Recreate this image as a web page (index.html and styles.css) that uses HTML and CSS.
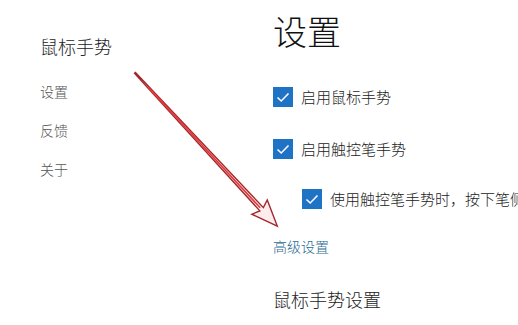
FILE: index.html
```html
<!DOCTYPE html>
<html lang="zh-CN">
<head>
<meta charset="utf-8">
<link rel="stylesheet" href="styles.css">
</head>
<body>
<div class="page">
  <aside class="sidebar">
    <div class="app-title">鼠标手势</div>
    <nav class="nav">
      <div class="nav-item">设置</div>
      <div class="nav-item">反馈</div>
      <div class="nav-item">关于</div>
    </nav>
  </aside>
  <main class="main">
    <h1 class="title">设置</h1>
    <div class="check-row">
      <span class="box"><svg viewBox="0 0 20 20" width="20" height="20"><path d="M4.5 10.5 L8.2 14 L15.5 6.5" fill="none" stroke="#fff" stroke-width="1.6"/></svg></span>
      <span class="label">启用鼠标手势</span>
    </div>
    <div class="check-row">
      <span class="box"><svg viewBox="0 0 20 20" width="20" height="20"><path d="M4.5 10.5 L8.2 14 L15.5 6.5" fill="none" stroke="#fff" stroke-width="1.6"/></svg></span>
      <span class="label">启用触控笔手势</span>
    </div>
    <div class="check-row sub">
      <span class="box"><svg viewBox="0 0 20 20" width="20" height="20"><path d="M4.5 10.5 L8.2 14 L15.5 6.5" fill="none" stroke="#fff" stroke-width="1.6"/></svg></span>
      <span class="label clip">使用触控笔手势时，按下笔侧键开始手势</span>
    </div>
    <a class="link">高级设置</a>
    <h2 class="section">鼠标手势设置</h2>
    <div class="next-row"><span class="n1">文本</span><span class="n2">方向</span></div>
  </main>
</div>
<svg class="arrow" width="518" height="325" viewBox="0 0 518 325">
  <g transform="translate(135,73) rotate(47.1)">
    <polygon points="0,-0.6 186,-2.4 183,-10.5 209,0 183,10.5 186,2.4 0,0.6" fill="rgba(255,225,225,0.6)" stroke="#a3262b" stroke-width="1.4" stroke-linejoin="miter"/>
    <line x1="20" y1="0" x2="184" y2="0" stroke="#e23a3a" stroke-width="1.6"/>
  </g>
</svg>
</body>
</html>
```

FILE: styles.css
```css
html, body {
  margin: 0;
  padding: 0;
  background: #fff;
}
body {
  width: 518px;
  height: 325px;
  overflow: hidden;
  position: relative;
  font-family: "Noto Sans CJK SC", "Noto Sans", sans-serif;
  color: #1a1a1a;
}
.page {
  display: flex;
}
.sidebar {
  width: 233px;
  padding-left: 40px;
  padding-top: 33px;
  flex-shrink: 0;
}
.app-title {
  font-size: 18px;
  font-weight: 300;
  line-height: 26px;
  color: #222;
}
.nav {
  margin-top: 22px;
  display: flex;
  flex-direction: column;
  gap: 19px;
}
.nav-item {
  font-size: 14px;
  font-weight: 300;
  line-height: 20px;
  color: #555;
}
.main {
  flex: 1;
  padding-top: 9px;
  min-width: 0;
  overflow: hidden;
}
.title {
  margin: 0;
  font-size: 34px;
  font-weight: 300;
  line-height: 44px;
  color: #111;
}
.check-row {
  display: flex;
  align-items: center;
  gap: 8px;
  height: 20px;
  margin-top: 34px;
}
.check-row + .check-row {
  margin-top: 32px;
}
.check-row.sub {
  margin-left: 29px;
  margin-top: 30px;
}
.box {
  width: 20px;
  height: 20px;
  background: #1f73c4;
  flex-shrink: 0;
  display: block;
}
.box svg {
  display: block;
}
.label {
  font-size: 15px;
  font-weight: 300;
  line-height: 20px;
  color: #222;
}
.clip {
  white-space: nowrap;
  overflow: hidden;
}
.link {
  display: block;
  margin-top: 27px;
  font-size: 14px;
  font-weight: 300;
  line-height: 20px;
  color: #1f6a8f;
}
.section {
  margin: 31px 0 0;
  font-size: 18px;
  font-weight: 300;
  line-height: 24px;
  color: #222;
}
.next-row {
  margin-top: 12px;
  font-size: 18px;
  line-height: 24px;
  display: flex;
  white-space: nowrap;
}
.n2 {
  margin-left: 80px;
}
.arrow {
  position: absolute;
  left: 0;
  top: 0;
  pointer-events: none;
}
```
